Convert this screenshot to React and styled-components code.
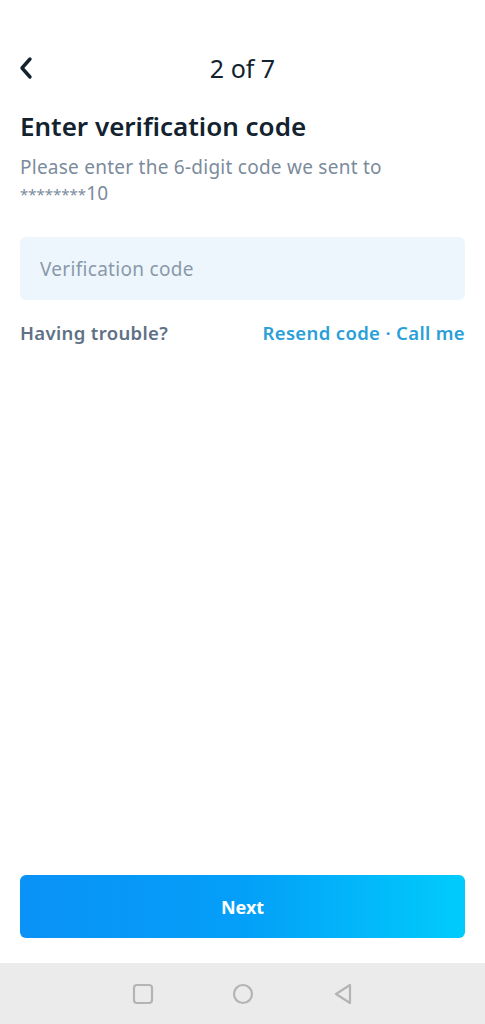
import React from "react";
import styled, { createGlobalStyle } from "styled-components";

const GlobalStyle = createGlobalStyle`
  html, body {
    margin: 0;
    padding: 0;
    background: #ffffff;
  }
  body {
    font-family: "Noto Sans", Lato, sans-serif;
    -webkit-font-smoothing: antialiased;
  }
  #root {
    min-height: 1024px;
  }
`;

const Screen = styled.div`
  width: 485px;
  height: 1024px;
  display: flex;
  flex-direction: column;
  background: #fff;
  color: #13222f;
`;

const StatusBar = styled.div`
  height: 44px;
`;

const TopBar = styled.div`
  height: 48px;
  display: grid;
  grid-template-columns: 60px 1fr 60px;
  align-items: center;
`;

const BackButton = styled.button`
  border: 0;
  background: none;
  padding: 0 0 0 18px;
  height: 48px;
  display: flex;
  align-items: center;
  color: #13222f;
  cursor: pointer;
`;

const StepLabel = styled.div`
  text-align: center;
  font-size: 25px;
  color: #13222f;
`;

const Content = styled.div`
  flex: 1;
  display: flex;
  flex-direction: column;
  padding: 0 20px;
`;

const Heading = styled.h1`
  margin: 18px 0 0;
  font-size: 26px;
  font-weight: 600;
  line-height: 32px;
  color: #13222f;
`;

const Subtitle = styled.p`
  margin: 12px 0 0;
  font-size: 19px;
  letter-spacing: 0.25px;
  line-height: 26px;
  color: #7b8b9c;
`;

const Masked = styled.span`
  font-size: 15px;
  letter-spacing: 0;
`;

const CodeInput = styled.input`
  margin-top: 30px;
  height: 63px;
  border: 0;
  border-radius: 6px;
  background: #eef6fd;
  padding: 0 20px;
  font-family: inherit;
  font-size: 19px;
  letter-spacing: 0.3px;
  color: #13222f;
  outline: none;
  &::placeholder {
    color: #8a99a9;
  }
`;

const HelpRow = styled.div`
  margin-top: 20px;
  display: flex;
  justify-content: space-between;
  align-items: center;
  font-size: 18.5px;
  letter-spacing: 0.35px;
  font-weight: 600;
`;

const Muted = styled.span`
  color: #5f7185;
`;

const LinkText = styled.span`
  color: #2a9fd8;
`;

const Spacer = styled.div`
  flex: 1;
`;

const NextButton = styled.button`
  height: 63px;
  margin-bottom: 25px;
  border: 0;
  border-radius: 6px;
  background: linear-gradient(90deg, #0a92f6 0%, #049ff8 50%, #00ccfb 100%);
  color: #fff;
  font-family: inherit;
  font-size: 18px;
  font-weight: 700;
  cursor: pointer;
`;

const NavBar = styled.div`
  height: 61px;
  background: #ebebeb;
  display: flex;
  justify-content: center;
  align-items: center;
  gap: 78px;
`;

const NavIcon = styled.svg`
  width: 22px;
  height: 22px;
  stroke: #b4b4b4;
  stroke-width: 2.2;
  fill: none;
`;

export default function App() {
  return (
    <>
      <GlobalStyle />
      <Screen>
        <StatusBar />
        <TopBar>
          <BackButton aria-label="Back">
            <svg width="18" height="24" viewBox="0 0 18 24" fill="none">
              <path d="M12 3 L4 12 L12 21" stroke="#13222f" strokeWidth="3.4" strokeLinecap="round" strokeLinejoin="round" />
            </svg>
          </BackButton>
          <StepLabel>2 of 7</StepLabel>
          <div />
        </TopBar>
        <Content>
          <Heading>Enter verification code</Heading>
          <Subtitle>
            Please enter the 6-digit code we sent to
            <br />
            <Masked>********</Masked>10
          </Subtitle>
          <CodeInput placeholder="Verification code" />
          <HelpRow>
            <Muted>Having trouble?</Muted>
            <LinkText>Resend code · Call me</LinkText>
          </HelpRow>
          <Spacer />
          <NextButton>Next</NextButton>
        </Content>
        <NavBar>
          <NavIcon viewBox="0 0 22 22">
            <rect x="2" y="2" width="18" height="18" rx="3" />
          </NavIcon>
          <NavIcon viewBox="0 0 22 22">
            <circle cx="11" cy="11" r="9" />
          </NavIcon>
          <NavIcon viewBox="0 0 22 22">
            <path d="M18 2 L4 11 L18 20 Z" strokeLinejoin="round" />
          </NavIcon>
        </NavBar>
      </Screen>
    </>
  );
}
